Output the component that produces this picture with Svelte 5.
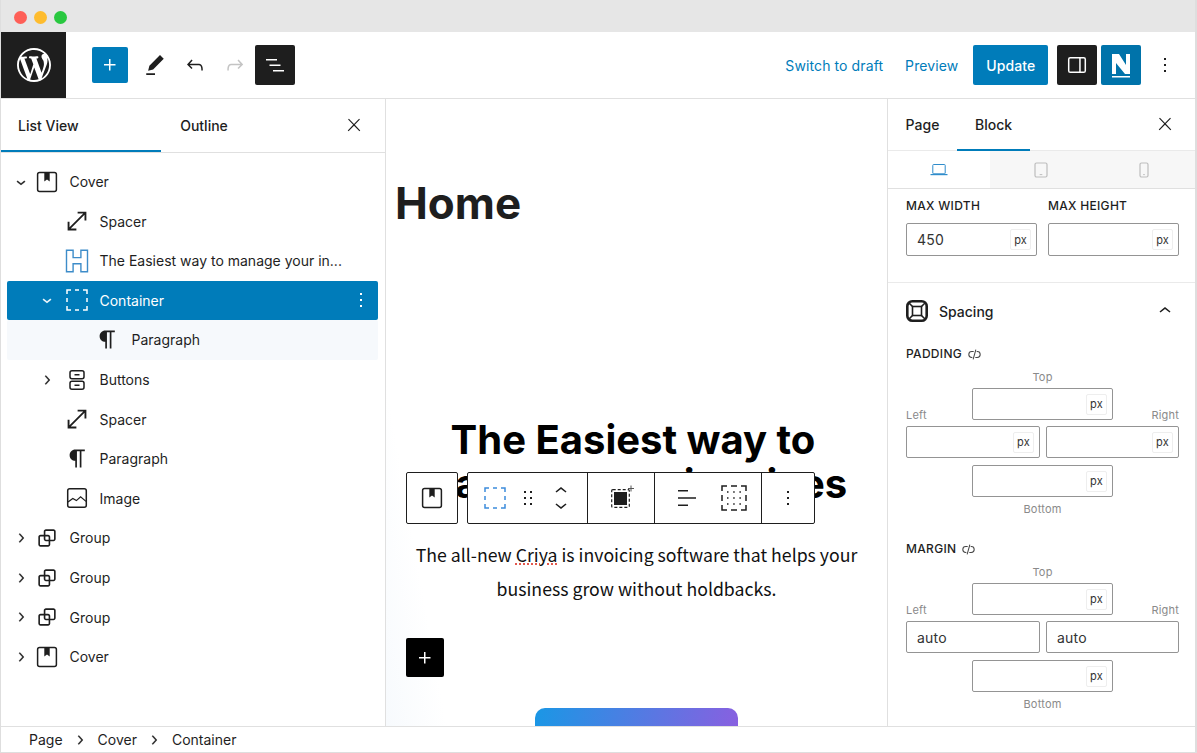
<script>
  const rows = [
    { label: 'Cover', icon: 'cover', level: 0, chev: 'down' },
    { label: 'Spacer', icon: 'spacer', level: 1 },
    { label: 'The Easiest way to manage your in...', icon: 'heading', level: 1 },
    { label: 'Container', icon: 'dashed', level: 1, chev: 'down', selected: true },
    { label: 'Paragraph', icon: 'para', level: 2, child: true },
    { label: 'Buttons', icon: 'buttons', level: 1, chev: 'right' },
    { label: 'Spacer', icon: 'spacer', level: 1 },
    { label: 'Paragraph', icon: 'para', level: 1 },
    { label: 'Image', icon: 'image', level: 1 },
    { label: 'Group', icon: 'group', level: 0, chev: 'right' },
    { label: 'Group', icon: 'group', level: 0, chev: 'right' },
    { label: 'Group', icon: 'group', level: 0, chev: 'right' },
    { label: 'Cover', icon: 'cover', level: 0, chev: 'right' }
  ];
  const P = {
    plus: 'M11 12.5V17.5H12.5V12.5H17.5V11H12.5V6H11V11H6V12.5H11Z',
    edit: 'm19 7-3-3-8.5 8.5-1 4 4-1L19 7Zm-7 11.5H5V20h7v-1.5Z',
    undo: 'M18.3 11.7c-.6-.6-1.4-.9-2.3-.9H6.7l2.9-3.3-1.1-1-4.5 5L8.5 16l1-1-2.7-2.7H16c.5 0 .9.2 1.3.5 1 1 1 3.4 1 4.5v.3h1.5v-.2c0-1.5 0-4.3-1.5-5.7z',
    redo: 'M15.6 6.5l-1.1 1 2.9 3.3H8c-.9 0-1.7.3-2.3.9-1.4 1.5-1.4 4.2-1.4 5.6v.2h1.5v-.3c0-1.1 0-3.5 1-4.5.3-.3.7-.5 1.3-.5h9.2L14.5 15l1.1 1.1 4.6-4.6-4.6-5z',
    list: 'M3 6h11v1.5H3V6Zm3.5 5.5h11V13h-11v-1.5ZM21 17H10v1.5h11V17Z',
    close: 'M13 11.8l6.1-6.3-1-1-6.1 6.2-6.1-6.2-1 1 6.1 6.3-6.5 6.7 1 1 6.5-6.6 6.5 6.6 1-1z',
    more: 'M13 19h-2v-2h2v2zm0-6h-2v-2h2v2zm0-6h-2V5h2v2z',
    down: 'M17.5 11.6L12 16l-5.5-4.4.9-1.2L12 14l4.5-3.6 1 1.2z',
    up: 'M6.5 12.4L12 8l5.5 4.4-.9 1.2L12 10l-4.5 3.6-1-1.2z',
    right: 'M10.6 6L9.4 7l4.6 5-4.6 5 1.2 1 5.4-6z',
    para: 'm9.99609 14v-.2251l.00391.0001v6.225h1.5v-14.5h2.5v14.5h1.5v-14.5h3v-1.5h-8.50391c-2.76142 0-5 2.23858-5 5 0 2.7614 2.23858 5 5 5z',
    group: 'M18 4h-7c-1.1 0-2 .9-2 2v3H6c-1.1 0-2 .9-2 2v7c0 1.1.9 2 2 2h7c1.1 0 2-.9 2-2v-3h3c1.1 0 2-.9 2-2V6c0-1.1-.9-2-2-2zm-4.5 14c0 .3-.2.5-.5.5H6c-.3 0-.5-.2-.5-.5v-7c0-.3.2-.5.5-.5h3V13c0 1.1.9 2 2 2h2.5v3zm0-4.5H11c-.3 0-.5-.2-.5-.5v-2.5H13c.3 0 .5.2.5.5v2.5zm5-.5c0 .3-.2.5-.5.5h-3V11c0-1.1-.9-2-2-2h-2.5V6c0-.3.2-.5.5-.5h7c.3 0 .5.2.5.5v7z',
    spacer: 'M7 18h4.5v1.5h-7v-7H6V17L17 6h-4.5V4.5h7v7H18V7L7 18Z',
    drag: 'M8 7h2V5H8v2zm0 6h2v-2H8v2zm0 6h2v-2H8v2zm6-14v2h2V5h-2zm0 8h2v-2h-2v2zm0 6h2v-2h-2v2z',
    wp: 'M20 10c0-5.51-4.49-10-10-10C4.48 0 0 4.49 0 10c0 5.52 4.48 10 10 10 5.51 0 10-4.48 10-10zM7.78 15.37L4.37 6.22c.55-.02 1.17-.08 1.17-.08.5-.06.44-1.13-.06-1.11 0 0-1.45.11-2.37.11-.18 0-.37 0-.58-.01C4.12 2.69 6.87 1.11 10 1.11c2.33 0 4.45.87 6.05 2.34-.68-.11-1.65.39-1.65 1.58 0 .74.45 1.36.9 2.1.35.61.55 1.36.55 2.46 0 1.49-1.4 5-1.4 5l-3.03-8.37c.54-.02.82-.17.82-.17.5-.05.44-1.25-.06-1.22 0 0-1.44.12-2.38.12-.87 0-2.33-.12-2.33-.12-.5-.03-.56 1.2-.06 1.22l.92.08 1.26 3.41zM17.41 10c.24-.64.74-1.87.43-4.25.7 1.29 1.05 2.71 1.05 4.25 0 3.29-1.73 6.24-4.4 7.78.97-2.59 1.94-5.2 2.92-7.78zM6.1 18.09C3.12 16.65 1.11 13.53 1.11 10c0-1.3.23-2.48.72-3.59C3.25 10.3 4.67 14.2 6.1 18.09zm4.03-6.63l2.58 6.98c-.86.29-1.76.45-2.71.45-.79 0-1.57-.11-2.29-.33.81-2.38 1.62-4.74 2.42-7.1z'
  };
  const dashed = 'M2 6V2h4M10 2h4M18 2h4v4M22 10v4M22 18v4h-4M14 22h-4M6 22H2v-4M2 14v-4';
</script>

{#snippet ico(name, size = 24)}
  <svg class="i" width={size} height={size} viewBox="0 0 24 24" fill="currentColor" aria-hidden="true"><path d={P[name]} /></svg>
{/snippet}

{#snippet coverIcon(size = 24)}
  <svg class="i" width={size} height={size} viewBox="0 0 24 24" aria-hidden="true">
    <rect x="2.6" y="2.6" width="18.8" height="18.8" rx="2" fill="none" stroke="currentColor" stroke-width="1.5" />
    <path d="M9.3 3h5.4v8.6L12 9.4l-2.7 2.2z" fill="currentColor" />
  </svg>
{/snippet}

{#snippet dashIcon(size = 24)}
  <svg class="i" width={size} height={size} viewBox="0 0 24 24" aria-hidden="true">
    <path d={dashed} fill="none" stroke="currentColor" stroke-width="1.5" />
  </svg>
{/snippet}

{#snippet rowIcon(name)}
  {#if name === 'cover'}
    {@render coverIcon(24)}
  {:else if name === 'dashed'}
    {@render dashIcon(24)}
  {:else if name === 'heading'}
    <svg class="i heading" width="24" height="24" viewBox="0 0 24 24" aria-hidden="true">
      <path d="M1.5 1.2h6.6v7.4h7.8V1.2h6.6v21.6h-6.6v-8H8.1v8H1.5z" fill="none" stroke="currentColor" stroke-width="1.4" />
    </svg>
  {:else if name === 'buttons'}
    <svg class="i" width="24" height="24" viewBox="0 0 24 24" aria-hidden="true">
      <g fill="none" stroke="currentColor" stroke-width="1.5">
        <rect x="5" y="2.8" width="14" height="8" rx="2" />
        <rect x="5" y="13.2" width="14" height="8" rx="2" />
        <path d="M9.5 6.8h5M9.5 17.2h5" />
      </g>
    </svg>
  {:else if name === 'image'}
    <svg class="i" width="24" height="24" viewBox="0 0 24 24" aria-hidden="true">
      <g fill="none" stroke="currentColor" stroke-width="1.5">
        <rect x="2.7" y="2.7" width="18.6" height="18.6" rx="2" />
        <path d="M3 16l4.8-3.6 3.6 2.2 4.2-3.8 5.4 4.6" stroke-width="1.2" />
      </g>
    </svg>
  {:else if name === 'spacer'}
    {@render ico('spacer', 30)}
  {:else if name === 'para'}
    {@render ico('para', 27)}
  {:else if name === 'group'}
    {@render ico('group', 26)}
  {:else}
    {@render ico(name)}
  {/if}
{/snippet}

{#snippet unlink(size = 13)}
  <svg class="i" width={size} height={size} viewBox="0 0 24 24" aria-hidden="true">
    <g fill="none" stroke="currentColor" stroke-width="1.9">
      <path d="M10.5 6.5H7a5.5 5.5 0 0 0 0 11h1" />
      <path d="M13.5 17.5H17a5.5 5.5 0 0 0 0-11h-1" />
      <path d="M14.5 3 9.5 21" />
    </g>
  </svg>
{/snippet}

{#snippet field(value = '', cls = '')}
  <div class="field {cls}">
    <span class="val">{value}</span>
    <span class="chip">px</span>
  </div>
{/snippet}

{#snippet box4(auto)}
  <div class="box4">
    <span class="side-top">Top</span>
    <span class="side-left">Left</span>
    {@render field('', 'f-top')}
    <span class="side-right">Right</span>
    {#if auto}
      <div class="field f-left"><span class="val">auto</span></div>
      <div class="field f-right"><span class="val">auto</span></div>
    {:else}
      {@render field('', 'f-left')}
      {@render field('', 'f-right')}
    {/if}
    {@render field('', 'f-bottom')}
    <span class="side-bottom">Bottom</span>
  </div>
{/snippet}

<div class="win">
  <div class="titlebar">
    <span class="dot red"></span><span class="dot yellow"></span><span class="dot green"></span>
  </div>

  <header class="top">
    <div class="wp">
      <svg width="34" height="34" viewBox="0 0 20 20" fill="#fff" aria-hidden="true"><path d={P.wp} /></svg>
    </div>
    <div class="tools">
      <button class="tb add">{@render ico('plus')}</button>
      <span class="tb-i">{@render ico('edit', 30)}</span>
      <span class="tb-i">{@render ico('undo')}</span>
      <span class="tb-i muted">{@render ico('redo')}</span>
      <button class="tb dark">{@render ico('list')}</button>
    </div>
    <div class="actions">
      <span class="link first">Switch to draft</span>
      <span class="link">Preview</span>
      <button class="update">Update</button>
      <button class="tb dark side-btn">
        <svg class="i" width="24" height="24" viewBox="0 0 24 24" aria-hidden="true">
          <rect x="3.7" y="4.7" width="16.6" height="14.6" rx="1.6" fill="none" stroke="currentColor" stroke-width="1.5" />
          <rect x="14.2" y="5" width="1.5" height="14" fill="currentColor" />
        </svg>
      </button>
      <button class="tb nbtn">
        <svg class="i" width="40" height="40" viewBox="0 0 40 40" aria-hidden="true">
          <path d="M11 9h7l7 11V9h4v20h-5L15 18v11h-4z" fill="#fff" />
          <rect x="11" y="31" width="18" height="1.5" fill="#fff" />
        </svg>
      </button>
      <span class="tb-i kebab">{@render ico('more')}</span>
    </div>
  </header>

  <div class="body">
    <aside class="left">
      <div class="ltabs">
        <div class="ltab active">List View</div>
        <div class="ltab center">Outline</div>
        <span class="lclose">{@render ico('close', 20)}</span>
      </div>
      <div class="tree">
        {#each rows as r}
          <div class="row lvl{r.level}" class:selected={r.selected} class:child={r.child}>
            <span class="chev">{#if r.chev}{@render ico(r.chev, 18)}{/if}</span>
            <span class="ric">{@render rowIcon(r.icon)}</span>
            <span class="rlabel">{r.label}</span>
            {#if r.selected}<span class="rmore">{@render ico('more')}</span>{/if}
          </div>
        {/each}
      </div>
    </aside>

    <main class="canvas">
      <h1 class="home">Home</h1>
      <h2 class="hero">The Easiest way to manage your invoices</h2>
      <p class="lead">The all-new <span class="spell">Criya</span> is invoicing software that helps your business grow without holdbacks.</p>
      <div class="cta"></div>

      <div class="blocktools">
        <div class="tbox parent">{@render coverIcon(24)}</div>
        <div class="tbox main">
          <div class="seg s1">
            <span class="blue">{@render dashIcon(24)}</span>
            <span class="tdrag">{@render ico('drag', 24)}</span>
            <span class="movers">
              {@render ico('up', 24)}
              {@render ico('down', 24)}
            </span>
          </div>
          <div class="seg s2">
            <svg class="i" width="30" height="30" viewBox="0 0 30 30" aria-hidden="true">
              <rect x="5.7" y="6.7" width="17.6" height="17.6" rx="1" fill="none" stroke="#1e1e1e" stroke-width="1.2" stroke-dasharray="3 2" />
              <rect x="8" y="9" width="13" height="13" fill="#1e1e1e" />
              <path d="M25 2.5v6M22 5.5h6" stroke="#555" stroke-width="1" />
            </svg>
          </div>
          <div class="seg s3">
            <svg class="i" width="24" height="24" viewBox="0 0 24 24" fill="#1e1e1e" aria-hidden="true">
              <path d="M3 4h10v1.4H3zM3 11.3h18v1.4H3zM3 18.6h10V20H3z" />
            </svg>
            <svg class="i" width="28" height="28" viewBox="0 0 28 28" aria-hidden="true">
              <path d="M2 7V2h5M11 2h6M21 2h5v5M26 11v6M26 21v5h-5M17 26h-6M7 26H2v-5M2 17v-6" fill="none" stroke="#1e1e1e" stroke-width="1.5" />
              <path d="M7 8h14M7 14h14M7 20h14" stroke="#1e1e1e" stroke-width="1.5" stroke-dasharray="1.5 4.7" fill="none" />
            </svg>
          </div>
          <div class="seg s4">{@render ico('more')}</div>
        </div>
      </div>

      <button class="inserter">{@render ico('plus', 24)}</button>
    </main>

    <aside class="right">
      <div class="rtabs">
        <div class="rtab">Page</div>
        <div class="rtab active">Block</div>
        <span class="rclose">{@render ico('close', 20)}</span>
      </div>
      <div class="devices">
        <div class="dev on">
          <svg width="18" height="18" viewBox="0 0 18 18" aria-hidden="true">
            <rect x="2.8" y="3.5" width="12.4" height="9.3" rx="0.8" fill="none" stroke="currentColor" stroke-width="1" />
            <rect x="0.5" y="13" width="17" height="1.2" fill="currentColor" />
          </svg>
        </div>
        <div class="dev">
          <svg width="16" height="18" viewBox="0 0 16 18" aria-hidden="true">
            <rect x="2" y="2" width="12" height="14" rx="1.5" fill="none" stroke="currentColor" stroke-width="1.2" />
            <path d="M6.7 13.6h2.6" stroke="currentColor" stroke-width="1" />
          </svg>
        </div>
        <div class="dev">
          <svg width="12" height="18" viewBox="0 0 12 18" aria-hidden="true">
            <rect x="2" y="2" width="8" height="14" rx="1.5" fill="none" stroke="currentColor" stroke-width="1.2" />
            <path d="M5.2 13.6h1.6" stroke="currentColor" stroke-width="1" />
          </svg>
        </div>
      </div>

      <section class="dims">
        <div class="dim">
          <div class="cap">Max width</div>
          {@render field('450')}
        </div>
        <div class="dim">
          <div class="cap">Max height</div>
          {@render field('')}
        </div>
      </section>

      <section class="spacing">
        <div class="sphead">
          <svg class="i spicon" width="24" height="24" viewBox="0 0 24 24" aria-hidden="true">
            <rect x="2.3" y="2.3" width="19.4" height="19.4" rx="5" fill="none" stroke="#1e1e1e" stroke-width="2.6" />
            <rect x="7.5" y="7.5" width="9" height="9" fill="none" stroke="#1e1e1e" stroke-width="1.6" />
            <path d="M4 4l4 4M20 4l-4 4M4 20l4-4M20 20l-4-4" stroke="#1e1e1e" stroke-width="1.6" />
          </svg>
          <span class="sptitle">Spacing</span>
          <span class="spchev">{@render ico('up')}</span>
        </div>
        <div class="cap row-cap">Padding <span class="ul">{@render unlink()}</span></div>
        {@render box4(false)}
        <div class="cap row-cap mg">Margin <span class="ul">{@render unlink()}</span></div>
        {@render box4(true)}
      </section>
    </aside>
  </div>

  <footer class="crumbs">
    <span>Page</span>{@render ico('right', 18)}<span>Cover</span>{@render ico('right', 18)}<span>Container</span>
  </footer>
</div>

<style>
  :global(body) { margin: 0; background: #fff; }
  * { box-sizing: border-box; }
  .win {
    width: 1197px; height: 753px; display: flex; flex-direction: column; overflow: hidden;
    font-family: Inter, "Liberation Sans", sans-serif; font-size: 14px; color: #1e1e1e;
    border: 1px solid #dedede; border-width: 0 2px 1px 1px; background: #fff;
  }
  .i { display: block; flex: none; }
  button { border: 0; padding: 0; font: inherit; color: inherit; background: none; }

  .titlebar { height: 32px; flex: none; background: #e6e6e6; display: flex; align-items: center; gap: 7px; padding: 2px 0 0 13px; }
  .dot { width: 13px; height: 13px; border-radius: 50%; }
  .red { background: #fe5f57; }
  .yellow { background: #febc2e; }
  .green { background: #29c840; }

  .top { height: 67px; flex: none; display: flex; align-items: flex-start; border-bottom: 1px solid #e0e0e0; }
  .wp { width: 65px; height: 66px; background: #1e1e1e; display: flex; align-items: center; justify-content: center; }
  .tools { display: flex; align-items: center; height: 66px; padding-left: 26px; }
  .tb { display: flex; align-items: center; justify-content: center; border-radius: 2px; }
  .add { width: 36px; height: 36px; background: #007cba; color: #fff; margin-right: 7px; }
  .tb-i { width: 40px; display: flex; justify-content: center; }
  .muted { color: #c4c4c4; }
  .dark { width: 40px; height: 40px; background: #1e1e1e; color: #fff; }
  .actions { margin-left: auto; display: flex; align-items: center; height: 66px; }
  .link { color: #007cba; letter-spacing: 0.1px; }
  .first { margin-right: 22px; }
  .update { width: 75px; height: 40px; margin-left: 15px; background: #007cba; color: #fff; border-radius: 2px; letter-spacing: 0.1px; font-weight: 500; }
  .side-btn { margin-left: 9px; }
  .nbtn { width: 40px; height: 40px; margin-left: 4px; background: #0073aa; }
  .kebab { margin-left: 3.5px; margin-right: 10.2px; }

  .body { flex: 1; display: flex; min-height: 0; }
  .left { width: 385px; flex: none; border-right: 1px solid #e0e0e0; }
  .ltabs { height: 54px; display: flex; position: relative; border-bottom: 1px solid #e0e0e0; }
  .ltab { width: 160px; height: 53px; display: flex; align-items: center; padding: 0 0 0 17px; font-weight: 500; }
  .ltab.center { justify-content: center; padding: 0; width: 86px; }
  .ltab.active { box-shadow: inset 0 -2px 0 #007cba; }
  .lclose { position: absolute; right: 21px; top: 16px; }
  .tree { padding: 8.8px 7px 0 5.5px; }
  .row { height: 39.6px; display: flex; align-items: center; border-radius: 2px; }
  .chev { width: 18px; height: 18px; display: flex; align-items: center; justify-content: center; margin-left: 5px; flex: none; }
  .chev :global(path) { stroke: currentColor; stroke-width: 0.5; }
  .ric { width: 24px; display: flex; justify-content: center; margin-left: 5.5px; margin-right: 10.5px; flex: none; }
  .lvl1 { padding-left: 26px; }
  .lvl2 { padding-left: 58px; }
  .lvl1 .ric { margin-left: 9.5px; margin-right: 10.5px; }
  .lvl2 .ric { margin-left: 8px; margin-right: 12px; }
  .rlabel { white-space: nowrap; }
  .selected { background: #007cba; color: #fff; }
  .child { background: #f6f9fc; }
  .rmore { margin-left: auto; margin-right: 5px; }
  .heading { color: #3d8cc9; }

  .canvas { flex: 1; min-width: 0; position: relative; overflow: hidden; background: linear-gradient(80deg, #f7fafd 0, #fff 60px); }
  .home { margin: 79px 0 0 9px; font-size: 44px; line-height: 50px; font-weight: 700; color: #1e1e1e; }
  .hero { width: 450px; margin: 190px 0 0 22px; text-align: center; font-size: 40px; line-height: 44px; font-weight: 700; color: #000; }
  .lead { width: 450px; margin: 31px auto 0; text-align: center; font-family: "Noto Sans CJK SC", "Noto Sans", sans-serif; font-size: 17.7px; line-height: 34px; color: #111; }
  .spell { text-decoration: underline dotted #e2574c; text-underline-offset: 2px; }
  .cta { width: 203px; height: 40px; margin: 103px auto 0; border-radius: 10px 10px 0 0; background: linear-gradient(100deg, #1a97e5, #8a5fe0); }

  .blocktools { position: absolute; left: 20px; top: 373px; display: flex; gap: 9px; }
  .tbox { height: 52px; background: #fff; border: 1px solid #1e1e1e; border-radius: 2px; display: flex; align-items: center; }
  .parent { width: 52px; justify-content: center; }
  .main { width: 348px; }
  .seg { height: 100%; display: flex; align-items: center; border-right: 1px solid #1e1e1e; }
  .s1 { width: 120px; padding-left: 15px; }
  .blue { color: #3d8cdc; }
  .tdrag { margin-left: 9px; }
  .movers { display: flex; flex-direction: column; margin-left: 9px; justify-content: center; }
  .movers :global(svg:first-child) { margin-bottom: -9.5px; }
  .s2 { width: 67px; justify-content: center; }
  .s3 { width: 107px; padding-left: 20px; gap: 21px; }
  .s4 { flex: 1; border-right: 0; justify-content: center; }
  .inserter { position: absolute; left: 20px; top: 539px; width: 38px; height: 39px; background: #000; color: #fff; border-radius: 2px; display: flex; align-items: center; justify-content: center; }

  .right { width: 308px; flex: none; border-left: 1px solid #e0e0e0; overflow: hidden; }
  .rtabs { height: 52px; display: flex; position: relative; border-bottom: 1px solid #eaeaea; }
  .rtab { height: 52px; display: flex; align-items: center; justify-content: center; font-weight: 500; width: 69px; padding-bottom: 2px; }
  .rtab.active { width: 73px; box-shadow: inset 0 -2px 0 #007cba; }
  .rclose { position: absolute; right: 20px; top: 15px; }
  .devices { height: 38px; display: flex; border-bottom: 1px solid #e0e0e0; }
  .dev { flex: 1; display: flex; align-items: center; justify-content: center; background: #f7f7f7; color: #bdbdbd; }
  .dev.on { background: #fff; color: #2f8ccb; }
  .cap { font-size: 12px; font-weight: 500; text-transform: uppercase; letter-spacing: 0.3px; line-height: 16px; color: #1e1e1e; }
  .dims { display: flex; gap: 11px; padding: 9px 16px 26px 18px; border-bottom: 1px solid #eaeaea; }
  .dim { width: 131px; }
  .dim .cap { margin-bottom: 9px; }
  .field { height: 33px; border: 1px solid #949494; border-radius: 2px; display: flex; align-items: center; padding: 0 5px 0 10px; background: #fff; }
  .val { font-size: 14px; letter-spacing: 0.2px; color: #333; }
  .chip { width: 21px; height: 21px; border: 1px solid #eee; border-radius: 2px; font-size: 11px; display: flex; align-items: center; justify-content: center; color: #333; margin-left: auto; }
  .spacing { padding: 16px 16px 0 18px; }
  .sphead { display: flex; align-items: center; height: 24px; }
  .spicon { margin-left: -1px; }
  .sptitle { margin-left: 10px; font-weight: 500; }
  .spchev { margin-left: auto; margin-right: 2px; }
  .row-cap { display: flex; align-items: center; gap: 6px; margin-top: 23px; }
  .row-cap.mg { margin-top: 25px; }
  .ul { color: #444; }

  .box4 {
    display: grid; margin-top: 7px; width: 273px;
    grid-template-columns: 66px 68px 6px 67px 66px;
    grid-template-rows: 19px 32px 38px 39px 19px;
    font-size: 11px; color: #8a8a8a; letter-spacing: 0.2px;
  }
  .side-top { grid-area: 1 / 1 / 2 / 6; text-align: center; line-height: 16px; }
  .side-left { grid-area: 2 / 1; align-self: end; line-height: 12px; margin-bottom: -1px; }
  .side-right { grid-area: 2 / 5; align-self: end; text-align: right; line-height: 12px; margin-bottom: -1px; }
  .f-top { grid-area: 2 / 2 / 3 / 5; }
  .f-left { grid-area: 3 / 1 / 4 / 3; margin-top: 6px; }
  .f-right { grid-area: 3 / 4 / 4 / 6; margin-top: 6px; }
  .f-bottom { grid-area: 4 / 2 / 5 / 5; margin-top: 7px; }
  .side-bottom { grid-area: 5 / 1 / 6 / 6; text-align: center; margin-top: 5px; line-height: 14px; }
  .box4 .field { height: 32px; align-self: start; }

  .crumbs { height: 26px; flex: none; border-top: 1px solid #e0e0e0; display: flex; align-items: center; padding: 0 0 0 28px; gap: 8.5px; }
  .crumbs :global(path) { stroke: currentColor; stroke-width: 0.5; }
</style>
